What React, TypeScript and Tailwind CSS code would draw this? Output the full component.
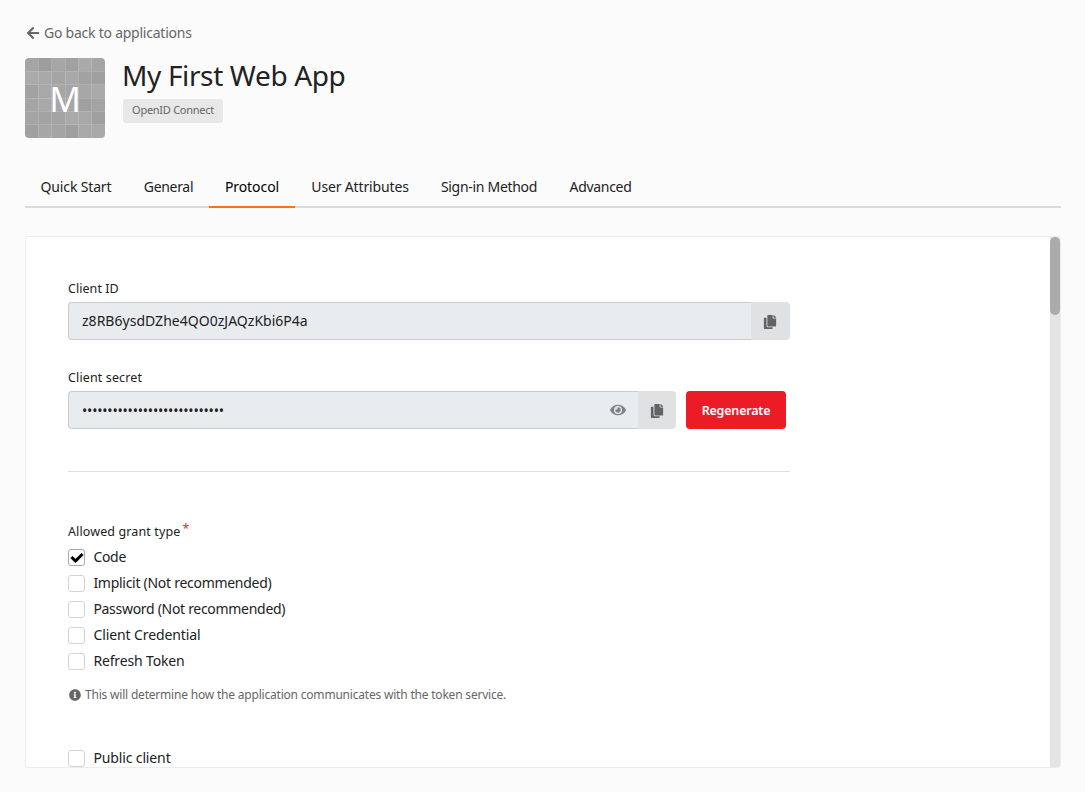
import { FaArrowLeft, FaCheck, FaCopy, FaEye, FaInfoCircle } from "react-icons/fa";

const tiles = [
  "#a5a5a5", "#9d9d9d", "#a6a6a6", "#a1a1a1", "#aaaaaa", "#a5a5a5",
  "#aaaaaa", "#a8a8a8", "#a5a5a5", "#a8a8a8", "#a2a2a2", "#9f9f9f",
  "#a2a2a2", "#a8a8a8", "#a6a6a6", "#a6a6a6", "#a7a7a7", "#aaaaaa",
  "#a5a5a5", "#a9a9a9", "#a7a7a7", "#a6a6a6", "#a0a0a0", "#a3a3a3",
  "#a4a4a4", "#a3a3a3", "#a4a4a4", "#aaaaaa", "#a8a8a8", "#a0a0a0",
  "#a0a0a0", "#a6a6a6", "#a4a4a4", "#9f9f9f", "#a8a8a8", "#a9a9a9",
];

const tabs = [
  { name: "Quick Start", box: "w-[103px] pr-px", text: "tracking-[-0.15px]" },
  { name: "General", box: "w-[81px]", text: "tracking-[-0.3px]" },
  { name: "Protocol", box: "w-[86px]", text: "tracking-[-0.07px]" },
  { name: "User Attributes", box: "w-[130px]", text: "tracking-[-0.15px]" },
  { name: "Sign-in Method", box: "w-[128px]", text: "tracking-[-0.3px]" },
  { name: "Advanced", box: "w-[95px]", text: "tracking-[-0.3px]" },
];

const grants = [
  { name: "Code", checked: true, text: "tracking-[-0.3px]" },
  { name: "Implicit (Not recommended)", checked: false, text: "tracking-[-0.28px]" },
  { name: "Password (Not recommended)", checked: false, text: "tracking-[-0.3px]" },
  { name: "Client Credential", checked: false, text: "tracking-[-0.1px]" },
  { name: "Refresh Token", checked: false, text: "tracking-[-0.15px]" },
];

function Avatar() {
  return (
    <div className="grid h-20 w-20 shrink-0 overflow-hidden rounded">
      <svg className="col-start-1 row-start-1" width="80" height="80" viewBox="0 0 80 80" shapeRendering="crispEdges">
        {tiles.map((fill, i) => (
          <rect key={i} x={(i % 6) * 13.333} y={Math.floor(i / 6) * 13.333} width="13.4" height="13.4" fill={fill} />
        ))}
        <path d="M13.5 0V80M26.5 0V80M40.5 0V80M53.5 0V80M66.5 0V80M0 13.5H80M0 26.5H80M0 40.5H80M0 53.5H80M0 66.5H80" stroke="#fff" strokeOpacity=".15" />
      </svg>
      <span className="col-start-1 row-start-1 self-center justify-self-center text-[35px] leading-none text-white">M</span>
    </div>
  );
}

function CheckRow({ name, checked, text }: { name: string; checked: boolean; text: string }) {
  return (
    <label className="flex h-[26px] items-center">
      <span className={`mt-px flex size-[17px] items-center justify-center rounded-[3px] border bg-white text-black ${checked ? "border-[#a9a9aa]" : "border-[#d4d4d5]"}`}>
        {checked && <FaCheck size={12} className="overflow-visible stroke-black [stroke-width:36]" />}
      </span>
      <span className={`ml-[8.4px] text-[14px] leading-5 whitespace-nowrap ${text}`}>{name}</span>
    </label>
  );
}

function CopyButton({ box }: { box: string }) {
  return (
    <button className={`flex h-[38px] shrink-0 items-center justify-center rounded-r bg-[#e0e1e2] pt-px text-[#626364] ${box}`}>
      <FaCopy size={14} />
    </button>
  );
}

export default function App() {
  return (
    <main className="flex h-[792px] w-[1085px] flex-col overflow-hidden bg-[#fbfbfb] pt-[23px] pl-[25px] font-['Noto_Sans',sans-serif] text-[14px] leading-5 text-[#222]">
      <a className="flex h-5 items-center text-[#666]">
        <FaArrowLeft size={14} className="ml-px" />
        <span className="ml-[4px] tracking-[-0.24px] whitespace-nowrap">Go back to applications</span>
      </a>
      <header className="mt-[15px] flex h-20">
        <Avatar />
        <div className="ml-[17px] flex flex-col items-start">
          <h1 className="h-[41px] text-[28px] leading-[34px] tracking-[-0.36px] whitespace-nowrap">My First Web App</h1>
          <span className="ml-px flex h-6 w-[100px] items-center justify-center rounded-[3px] bg-[#e8e8e8] pb-[2px] text-[11px] tracking-[-0.27px] whitespace-nowrap text-[#666]">OpenID Connect</span>
        </div>
      </header>
      <nav className="mt-[29px] flex h-[41px] w-[1036px] shrink-0 border-b-2 border-[#dbdbdb]">
        {tabs.map((tab) => (
          <a
            key={tab.name}
            className={`flex h-[41px] shrink-0 items-center justify-center whitespace-nowrap ${tab.box} ${tab.name === "Protocol" ? "border-b-2 border-[#fc7114] text-black" : "pb-[2px]"}`}
          >
            <span className={tab.text}>{tab.name}</span>
          </a>
        ))}
      </nav>
      <section className="mt-7 flex h-[532px] w-[1036px] shrink-0 overflow-hidden rounded-[3px] border border-[#ececec] bg-white">
        <div className="flex w-[1024px] shrink-0 flex-col pt-[42px] pl-[42px] *:shrink-0">
          <label className="h-[23px] text-[12.5px] leading-[19px]">
            <span className="tracking-[0.05px]">Client ID</span>
          </label>
          <div className="flex h-[38px] w-[722px]">
            <div className="flex flex-1 items-center rounded-l border border-r-0 border-[#c8ccd0] bg-[#e8ecef] pl-[13px]">
              <span className="tracking-[0.02px]">z8RB6ysdDZhe4QO0zJAQzKbi6P4a</span>
            </div>
            <CopyButton box="w-[39px] pr-px" />
          </div>
          <label className="mt-7 h-[23px] text-[12.5px] leading-[19px]">
            <span className="tracking-[0.13px]">Client secret</span>
          </label>
          <div className="flex h-[38px] w-[718px]">
            <div className="flex flex-1 items-center justify-between rounded-l border border-r-0 border-[#c8ccd0] bg-[#e8ecef] pr-[12px] pl-[13px]">
              <span className="pt-[2px] tracking-[-0.2px]">••••••••••••••••••••••••••••</span>
              <FaEye size={16} className="text-[#808385]" />
            </div>
            <CopyButton box="w-[38px]" />
            <button className="ml-[10px] h-[38px] w-[100px] rounded bg-[#eb1c26] pt-px text-[12.5px] font-semibold text-white">
              <span className="tracking-[-0.2px]">Regenerate</span>
            </button>
          </div>
          <hr className="mt-[42px] w-[722px] border-[#dededf]" />
          <div className="mt-[49px] flex h-[23px] text-[12.5px] leading-[21px]">
            <span className="tracking-[0.12px]">Allowed grant type</span>
            <span className="-mt-[3px] ml-[2px] text-[#f0232b]">*</span>
          </div>
          <div className="flex flex-col">
            {grants.map((grant) => (
              <CheckRow key={grant.name} {...grant} />
            ))}
          </div>
          <p className="mt-[11px] flex h-5 items-center text-[12px] text-[#666]">
            <FaInfoCircle size={12} className="mb-px ml-px" />
            <span className="ml-1 tracking-[-0.2px] whitespace-nowrap">This will determine how the application communicates with the token service.</span>
          </p>
          <div className="mt-[40px]">
            <CheckRow name="Public client" checked={false} text="tracking-[-0.13px]" />
          </div>
        </div>
        <div className="h-full w-[10px] shrink-0 bg-[#e4e4e4]">
          <div className="h-[78px] w-[10px] rounded-[5px] bg-[#ababab]" />
        </div>
      </section>
    </main>
  );
}
